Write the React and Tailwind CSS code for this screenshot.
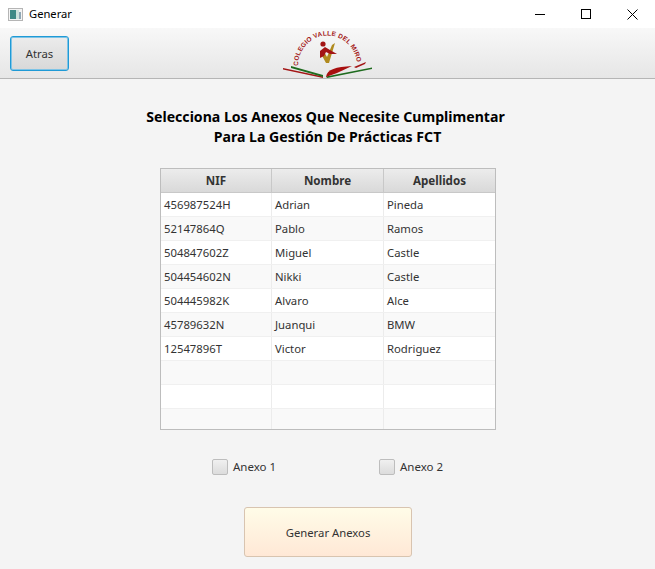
const rows = [
  ["456987524H", "Adrian", "Pineda"],
  ["52147864Q", "Pablo", "Ramos"],
  ["504847602Z", "Miguel", "Castle"],
  ["504454602N", "Nikki", "Castle"],
  ["504445982K", "Alvaro", "Alce"],
  ["45789632N", "Juanqui", "BMW"],
  ["12547896T", "Victor", "Rodriguez"],
  ["", "", ""],
  ["", "", ""],
  ["", "", ""],
];

const font = "[font-family:'Noto_Sans','Open_Sans',sans-serif]";

const Logo = () => (
  <svg width="92" height="52" viewBox="0 0 92 52">
    <defs>
      <path id="arc" d="M16 38 A29 30 0 0 1 75 38" />
    </defs>
    <text fill="#a31515" fontSize="6.5" fontWeight="700" letterSpacing="0.2" fontFamily="'Liberation Sans', sans-serif">
      <textPath href="#arc">COLEGIO VALLE DEL MIRO</textPath>
    </text>
    <circle cx="41" cy="16" r="2.6" fill="#a31515" />
    <path d="M38 24 L44 35 L47 35 L53 15 L50 17 L45 29 L41 22 Z" fill="#b08a1e" />
    <path d="M38 30 L38 23 L43 19 L48 22 L55 26 L48 26 L44 24 L42 28 Z" fill="#a31515" />
    <path d="M1 40 L41 48.5 L41 50 L1 41.5 Z" fill="#a31515" />
    <path d="M9 38 L41 47 L41 49 L9 40 Z" fill="#1e6b1e" />
    <path d="M44 48.5 L90 39.5 L90 41 L45 50 Z" fill="#1e6b1e" />
    <path d="M44 49 C45 41 54 39 70 38 L55 45 Z" fill="#a80f0f" />
    <path d="M72 39 L84 34 L83 36 L74 40 Z" fill="#a31515" />
  </svg>
);

const Check = ({ label }) => (
  <div className="w-[167px] flex items-center gap-[5px]">
    <div className="w-4 h-4 rounded-[2px] border border-[#bdbdbd] bg-gradient-to-b from-[#f0f0f0] to-[#dcdcdc]" />
    <span className="text-[11.5px] leading-[15px] pb-[2px] text-[#333333]">{label}</span>
  </div>
);

export default function App() {
  return (
    <div className={`w-[655px] h-[569px] bg-[#f4f4f4] overflow-hidden flex flex-col ${font}`}>
      {/* window title */}
      <div className="h-7 bg-white flex items-center shrink-0">
        <svg className="ml-2 mr-[6px]" width="15" height="13" viewBox="0 0 15 13">
          <rect x="0.5" y="0.5" width="14" height="12" fill="#f4f4f4" stroke="#b5b5b5" />
          <rect x="2" y="2" width="6" height="9" fill="#3f8a86" />
          <rect x="8" y="2" width="3" height="9" fill="#cfe3dd" />
          <rect x="11" y="4" width="2" height="7" fill="#8fa7b5" />
        </svg>
        <span className="text-[11.2px] text-black">Generar</span>
        <div className="ml-auto flex items-center">
          <div className="w-[46px] h-7 flex items-center justify-center">
            <div className="w-[10px] h-px bg-black" />
          </div>
          <div className="w-[46px] h-7 flex items-center justify-center">
            <div className="w-[10px] h-[10px] border border-black" />
          </div>
          <div className="w-[46px] h-7 flex items-center justify-center">
            <svg width="11" height="11" viewBox="0 0 11 11" stroke="#000" fill="none">
              <path d="M0.5 0.5 L10.5 10.5 M10.5 0.5 L0.5 10.5" />
            </svg>
          </div>
        </div>
      </div>

      {/* toolbar */}
      <div className="h-[51px] shrink-0 border-b border-[#b5b5b5] bg-gradient-to-b from-[#f8f8f8] to-[#e6e6e6] flex items-center px-[10px] relative">
        <button className="w-[59px] h-[35px] pt-[2px] rounded-[3px] border border-[#1f9ad6] shadow-[inset_0_0_0_1px_#7fc4e6] bg-gradient-to-b from-[#ececec] to-[#d8d8d8] text-[11.3px] text-[#333333]">
          Atras
        </button>
        <div className="absolute left-[282px] top-0">
          <Logo />
        </div>
      </div>

      {/* title */}
      <div className="mt-[28px] text-center text-[14.1px] leading-5 font-bold text-black">
        <div className="pr-[4px]">Selecciona Los Anexos Que Necesite Cumplimentar</div>
        <div>Para La Gestión De Prácticas FCT</div>
      </div>

      {/* table */}
      <div className="ml-[160px] mt-[21px] w-[336px] h-[262px] border border-[#bdbdbd] bg-white overflow-hidden shrink-0">
        <div className="grid grid-cols-[111px_112px_111px] h-6 border-b border-[#c8c8c8]">
          {["NIF", "Nombre", "Apellidos"].map((h) => (
            <div
              key={h}
              className="flex items-center justify-center text-[11.6px] font-bold text-[#333333] border-r border-[#c8c8c8] last:border-r-0 bg-gradient-to-b from-[#ececec] to-[#d9d9d9]"
            >
              {h}
            </div>
          ))}
        </div>
        {rows.map((r, i) => (
          <div
            key={i}
            className={`grid grid-cols-[111px_112px_111px] h-6 border-b border-[#f0f0f0] ${i % 2 ? "bg-[#f9f9f9]" : "bg-white"}`}
          >
            {r.map((c, j) => (
              <div key={j} className="flex items-center px-[3px] pt-[2px] text-[11.3px] text-[#333333] border-r border-[#ececec] last:border-r-0">
                {c}
              </div>
            ))}
          </div>
        ))}
      </div>

      {/* checkboxes */}
      <div className="ml-[212px] mt-[29px] h-4 flex">
        <Check label="Anexo 1" />
        <Check label="Anexo 2" />
      </div>

      <button className="ml-[244px] mt-[32px] w-[168px] h-[50px] pt-[3px] shrink-0 rounded-[3px] border border-[#d8c4b0] bg-gradient-to-b from-[#fffce8] to-[#ffe8d6] text-[11.3px] text-[#333333]">
        Generar Anexos
      </button>
    </div>
  );
}
